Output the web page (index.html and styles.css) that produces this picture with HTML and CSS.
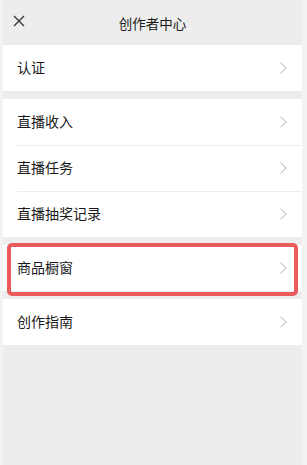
FILE: index.html
```html
<!DOCTYPE html>
<html lang="zh-CN">
<head>
  <meta charset="UTF-8">
  <meta name="viewport" content="width=device-width, initial-scale=1.0">
  <title>创作者中心</title>
  <link rel="stylesheet" href="styles.css">
</head>
<body>
  <div class="page">
    <div class="topbar">
      <svg class="close" width="12" height="12" viewBox="0 0 12 12">
        <path d="M1 1L11 11M11 1L1 11" stroke="#333" stroke-width="1.3" fill="none"/>
      </svg>
      <div class="title">创作者中心</div>
    </div>

    <ul class="group">
      <li class="cell"><span>认证</span><i class="arrow"></i></li>
    </ul>

    <ul class="group">
      <li class="cell"><span>直播收入</span><i class="arrow"></i></li>
      <li class="cell"><span>直播任务</span><i class="arrow"></i></li>
      <li class="cell"><span>直播抽奖记录</span><i class="arrow"></i></li>
    </ul>

    <ul class="group mark">
      <li class="cell"><span>商品橱窗</span><i class="arrow"></i></li>
    </ul>

    <ul class="group">
      <li class="cell"><span>创作指南</span><i class="arrow"></i></li>
    </ul>
  </div>
</body>
</html>
```

FILE: styles.css
```css
body, html {
  margin: 0;
  padding: 0;
  height: 100%;
  background-color: #f3f3f3;
  font-family: "Noto Sans CJK SC", "Liberation Sans", sans-serif;
}
.page {
  margin: 0 5px 0 3px;
  min-height: 100%;
  background-color: #ededed;
}
.topbar {
  height: 45px;
  position: relative;
  display: flex;
  align-items: center;
  justify-content: center;
}
.topbar .close {
  position: absolute;
  left: 10px;
  top: 15px;
}
.title {
  font-size: 13.5px;
  color: #1b1b1b;
}
.group {
  list-style: none;
  margin: 0 0 8px 0;
  padding: 0;
  background: #fff;
}
.cell {
  height: 46px;
  display: flex;
  align-items: center;
  justify-content: space-between;
  padding: 0 15px 0 14px;
  font-size: 14px;
  color: #1a1a1a;
  position: relative;
}
.cell span {
  margin-top: -2px;
}
.cell + .cell::before {
  content: "";
  position: absolute;
  top: 0;
  left: 14px;
  right: 0;
  border-top: 1px solid #ececec;
}
.arrow {
  width: 7px;
  height: 7px;
  border-top: 1.2px solid #c4c4c4;
  border-right: 1.2px solid #c4c4c4;
  transform: rotate(45deg);
  margin-right: 2px;
}
/* 红框标注 */
.mark {
  position: relative;
}
.mark::after {
  content: "";
  position: absolute;
  top: -2px;
  bottom: -5px;
  left: 4px;
  right: 4px;
  border: 4px solid #ea5b5b;
  border-radius: 5px;
}
```
